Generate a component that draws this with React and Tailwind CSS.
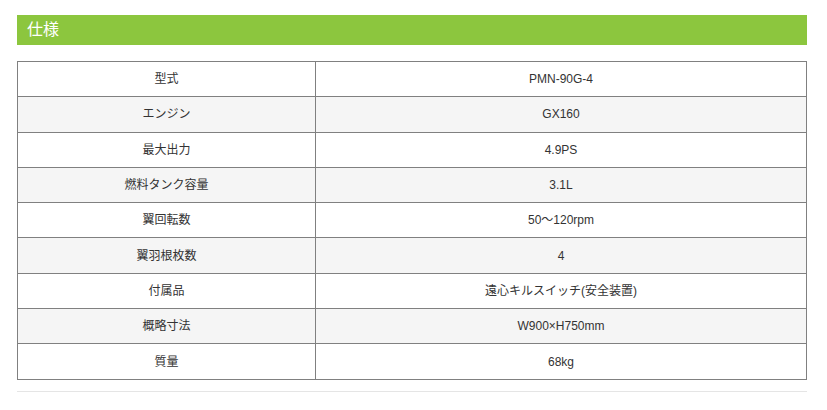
import React from "react";

const specs = [
  ["型式", "PMN-90G-4"],
  ["エンジン", "GX160"],
  ["最大出力", "4.9PS"],
  ["燃料タンク容量", "3.1L"],
  ["翼回転数", "50〜120rpm"],
  ["翼羽根枚数", "4"],
  ["付属品", "遠心キルスイッチ(安全装置)"],
  ["概略寸法", "W900×H750mm"],
  ["質量", "68kg"],
];

export default function App() {
  return (
    <div
      className="w-[827px] h-[410px] bg-white pl-[17px] pr-[20px] pt-[15px] text-[#333]"
      style={{ fontFamily: '"Liberation Sans", "Noto Sans CJK JP", sans-serif' }}
    >
      <h2 className="h-[30px] bg-[#8cc63e] pl-[10px] flex items-center text-white text-[16px] leading-none">
        仕様
      </h2>

      <table className="mt-[16px] w-full border-collapse border border-[#808080] text-[12px]">
        <tbody>
          {specs.map(([label, value], i) => (
            <tr key={label} className={i % 2 === 1 ? "bg-[#f5f5f5]" : "bg-white"}>
              <td className="h-[35.3px] w-[298px] border border-[#808080] text-center align-middle p-0">
                {label}
              </td>
              <td className="h-[35.3px] border border-[#808080] text-center align-middle p-0">
                {value}
              </td>
            </tr>
          ))}
        </tbody>
      </table>

      <div className="mt-[11px] border-t border-[#e5e5e5]" />
    </div>
  );
}
